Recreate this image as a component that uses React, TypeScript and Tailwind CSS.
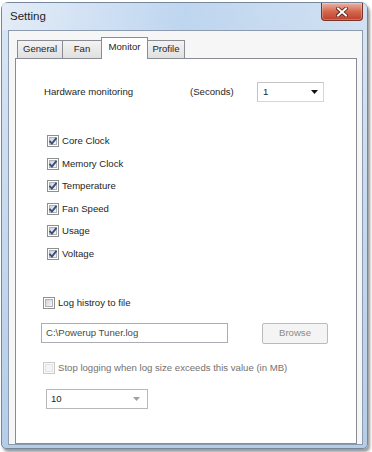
import React from "react";

const font = "font-['Liberation_Sans',Arial,sans-serif]";

function Box({ checked = false, disabled = false }: { checked?: boolean; disabled?: boolean }) {
  return (
    <span
      className={`relative flex h-[12px] w-[12px] shrink-0 items-center justify-center border ${
        disabled ? "border-[#cacaca] bg-[#f8f8f8]" : "border-[#8e8f8f] bg-white"
      }`}
    >
      <span
        className={`h-[8px] w-[8px] border ${
          disabled
            ? "border-[#e4e4e4] bg-[#f3f3f3]"
            : "border-[#aeb2b8] bg-linear-to-br from-[#cfd3d9] to-[#f6f6f7]"
        }`}
      />
      {checked && (
        <svg className="absolute inset-0" width="10" height="10" viewBox="0 0 10 10">
          <path d="M1.5 4.8 L3.9 7.6 L8.5 1.8" fill="none" stroke="#3a4d78" strokeWidth="1.9" />
        </svg>
      )}
    </span>
  );
}

function Tab({ label, active = false, w }: { label: string; active?: boolean; w: string }) {
  if (active) {
    return (
      <div className={`relative z-10 -mb-px -ml-px flex h-[22px] items-start justify-center border border-b-0 border-[#898c95] bg-white pt-[2px] ${w}`}>
        {label}
      </div>
    );
  }
  return (
    <div className={`-ml-px flex h-[18px] items-center justify-center border border-b-0 border-[#898c95] bg-linear-to-b from-[#f3f3f3] to-[#e0e0e0] first:ml-0 ${w}`}>
      {label}
    </div>
  );
}

const items = ["Core Clock", "Memory Clock", "Temperature", "Fan Speed", "Usage", "Voltage"];

export default function App() {
  return (
    <div className={`h-[452px] w-[372px] overflow-hidden bg-white pl-[1px] pt-[2px] text-[9.6px] text-[#262626] ${font}`}>
      <div className="flex h-[447px] w-[367px] flex-col rounded-t-[7px] rounded-b-[5px] border border-[#75879c] bg-linear-to-b from-[#dae6f3] via-[#c6d9ee] to-[#b6cde8] shadow-[2px_3px_3px_rgba(0,0,0,0.4)]">
        {/* title bar */}
        <div className="flex h-[27px] shrink-0 items-start justify-between bg-linear-to-r from-[#e6eef8]/80 via-[#b3cfee]/70 to-[#cadcf0]/50 pr-[4px]">
          <span className="self-center pl-[8px] text-[11.5px] text-[#1e1e1e]">Setting</span>
          <div className="flex h-[18px] w-[42px] items-center justify-center rounded-b-[4px] border border-t-0 border-[#7b3328] bg-linear-to-b from-[#eab3a5] via-[#d2684f] to-[#bf3f28] shadow-[inset_0_0_0_1px_rgba(255,255,255,0.25)]">
            <svg width="12" height="10" viewBox="0 0 12 10">
              <path d="M2 1.5 L10 8.5 M10 1.5 L2 8.5" stroke="#4a1a12" strokeWidth="3.6" strokeLinecap="square" />
              <path d="M2 1.5 L10 8.5 M10 1.5 L2 8.5" stroke="#ffffff" strokeWidth="2" strokeLinecap="square" />
            </svg>
          </div>
        </div>

        {/* client area */}
        <div className="mb-[3px] ml-[6px] mr-[4px] flex flex-1 flex-col border border-[#8c9bb0] bg-[#f6f6f6]">
          <div className="flex h-[27px] shrink-0 items-end pl-[8px]">
            <Tab label="General" w="w-[46px]" />
            <Tab label="Fan" w="w-[40px]" />
            <Tab label="Monitor" active w="w-[47px]" />
            <Tab label="Profile" w="w-[38px]" />
          </div>

          <div className="ml-[6px] mr-[5px] flex flex-1 flex-col border border-[#898c95] bg-white">
            {/* hardware monitoring */}
            <div className="mt-[23px] flex h-[20px] items-center pl-[28px]">
              <span className="w-[146px]">Hardware monitoring</span>
              <span className="w-[67px]">(Seconds)</span>
              <div className="flex h-[20px] w-[67px] items-center justify-between border border-[#d6d6d6] border-l-[#c4c4c4] border-t-[#c4c4c4] pl-[5px] pr-[5px]">
                <span>1</span>
                <svg width="7" height="4" viewBox="0 0 7 4">
                  <path d="M0 0 H7 L3.5 4 Z" fill="#111" />
                </svg>
              </div>
            </div>

            {/* metric list */}
            <div className="mt-[28px] flex flex-col pl-[31px]">
              {items.map((it) => (
                <div key={it} className="flex h-[22.5px] items-center gap-[3px]">
                  <Box checked />
                  <span>{it}</span>
                </div>
              ))}
            </div>

            {/* log to file */}
            <div className="mt-[31px] flex h-[14px] items-center gap-[3px] pl-[27px]">
              <Box />
              <span>Log histroy to file</span>
            </div>

            <div className="mt-[13px] flex h-[21px] items-start pl-[25px]">
              <div className="flex h-[20px] w-[187px] items-center border border-[#aaadb3] bg-white pl-[4px] text-[#4a4a4a]">
                C:\Powerup Tuner.log
              </div>
              <div className="ml-[34px] flex h-[21px] w-[66px] items-center justify-center rounded-[2px] border border-[#b9bcbf] bg-[#f4f4f4] text-[#8a8a8a]">
                Browse
              </div>
            </div>

            <div className="mt-[17px] flex h-[14px] items-center gap-[3px] pl-[27px] text-[#727272]">
              <Box disabled />
              <span>Stop logging when log size exceeds this value (in MB)</span>
            </div>

            <div className="ml-[30px] mt-[14px] flex h-[20px] w-[102px] items-center justify-between border border-[#b8b8b8] bg-white pl-[4px] pr-[7px]">
              <span>10</span>
              <svg width="7" height="4" viewBox="0 0 7 4">
                <path d="M0 0 H7 L3.5 4 Z" fill="#a0a0a0" />
              </svg>
            </div>
          </div>
        </div>
      </div>
    </div>
  );
}
